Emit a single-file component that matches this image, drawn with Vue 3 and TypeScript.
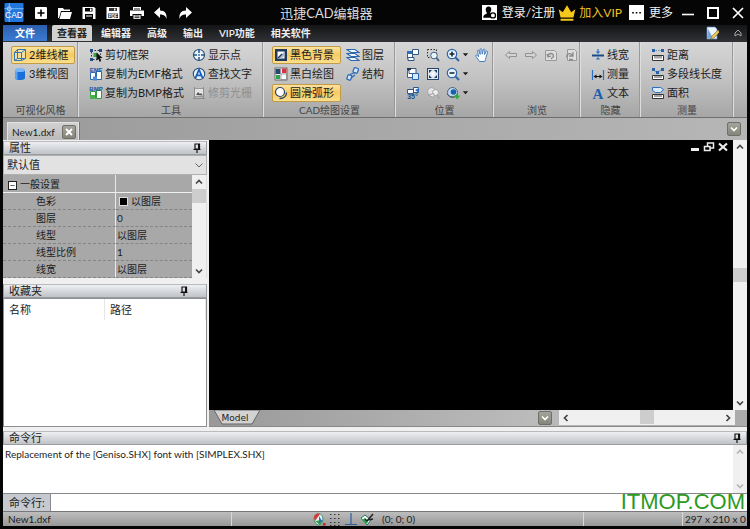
<script setup lang="ts">
import { ref } from 'vue'

interface Tool {
  icon: string
  label: string
  on?: boolean
  off?: boolean
}

const page = '<path d="M1.5 3.5h5v7h-5z" fill="#fff" stroke="#3b5f8f"/>'

const icons: Record<string, string> = {
  plus: '<rect x="1" y="1" width="12" height="12" rx="1" fill="#fff"/><path d="M7 3.500v7M3.500 7h7" stroke="#000" stroke-width="1.600"/>',
  folder: '<path d="M0 2h5l1 1.500h6V5H3L1 12H0z" fill="#fff"/><path d="M3.500 6H14l-2 7H1.500z" fill="#fff"/>',
  save: '<path d="M0.500 1h11.500l1.500 1.500V13h-13z" fill="#fff"/><path d="M3 2h7.500v3.500H3zM3 8h8v5H3z" fill="#000"/><path d="M8 2.500h1.500v2.500H8zM4 9.500h6v1H4z" fill="#fff"/>',
  savepdf: '<path d="M0.500 1h13v12h-13z" fill="#fff"/><path d="M3 2h8v3H3zM2 7.500h10v4.500H2z" fill="#333"/><path d="M8 2.500h1.500v2H8z" fill="#fff"/><text x="7" y="11.500" font-size="4.500" font-weight="bold" text-anchor="middle" fill="#fff" font-family="Liberation Sans">PDF</text>',
  print: '<path d="M3 1h8v3H3zM0 4.500h14V10h-2.500V8h-9v2H0z" fill="#fff"/><path d="M3.500 9h7v4h-7z" fill="#fff"/><path d="M4 3h6M4.500 10h5M4.500 11.700h5" stroke="#000" stroke-width="0.900"/>',
  undo: '<path d="M6 1v3.500c5 0 7 3 6.500 8.500-1-3.500-3-4.500-6.500-4.500V12L0 6.500z" fill="#fff"/>',
  redo: '<path d="M8 1v3.500c-5 0-7 3-6.500 8.500 1-3.500 3-4.500 6.500-4.500V12l6-5.500z" fill="#fff"/>',
  user: '<rect width="14" height="14" fill="#fff"/><path d="M6 1.500c2 0 3 1.300 2.600 3.500-.2 1-.6 1.500-1 2 .1 1 1 1 1.400 1.500L8 12H1.200c0-2.500.8-2.800 3.200-3.800V7C3 5.500 3 1.500 6 1.500z" fill="#000"/><circle cx="10.200" cy="9.700" r="2.400" fill="#fff" stroke="#000" stroke-width="1.200"/>',
  crown: '<path d="M0.500 4l3.200 2.500L7 1l3.300 5.500L13.500 4 12 10.500H2zM2 11.500h10V13H2z" fill="#f7c81c"/>',
  dots: '<rect width="14" height="14" fill="#fff"/><path d="M3 6.500h1.500V8H3zM6.300 6.500h1.500V8H6.300zM9.600 6.500h1.500V8H9.600z" fill="#000"/>',
  min: '<path d="M1 8.500h12" stroke="#fff" stroke-width="1.600"/>',
  max: '<rect x="2" y="2" width="10" height="10" fill="none" stroke="#fff" stroke-width="2"/>',
  close: '<path d="M2 2l10 10M12 2L2 12" stroke="#fff" stroke-width="1.700"/>',
  note: '<path d="M2 1h8l2 2v10H2z" fill="#eef4fc" stroke="#5a86c2" stroke-width="0.700"/><path d="M2 13L3 3l5 9z" fill="#78a7e0"/><path d="M13 4L7 10l-1.500 3L9 12l5.500-6z" fill="#e8c860" stroke="#7a6020" stroke-width="0.600"/>',
  wire: '<path d="M4.500 1.500h8v9h-8zM1.500 4.500h7v8h-7zM1.500 4.500l3-3M8.500 4.500l4-3M8.500 12.500l4-2M1.500 12.500l3-2" fill="#e9f0d8" fill-opacity="0.500" stroke="#3277b4"/>',
  cylinder: '<path d="M2 3v8c0 2.700 10 2.700 10 0V3z" fill="#1b6fdd"/><path d="M2 3v8c0 .8 1 1.400 2.500 1.700V4z" fill="#5da2f3"/><ellipse cx="7" cy="3" rx="5" ry="2" fill="#7ab6f8"/>',
  clip: '<path d="M2.500 2.500h9v9h-9z" fill="none" stroke="#333" stroke-dasharray="1.500 1.500"/><path d="M1 1h3v3H1zM10 1h3v3h-3zM1 10h3v3H1z" fill="#234c85"/><path d="M4.500 5h4v4h-4z" fill="#36a04a"/><path d="M7.500 4.500l6 5.500-2.500.2 1.200 3-1.600.6-1.200-2.900-1.900 1.700z" fill="#111"/>',
  emf: '<path d="M1.500 5.500h5v7h-5zM7.500 4.500h5v8h-5z" fill="#fff" stroke="#2d68b0"/><path d="M4 9.500h4v4H4z" fill="#4d8bd8"/><text x="7" y="5" font-size="6" font-weight="bold" text-anchor="middle" fill="#1757a6" font-family="Liberation Sans">EMF</text>',
  bmp: '<path d="M1.500 5.500h5v7h-5zM7.500 4.500h5v8h-5z" fill="#fff" stroke="#319c3c"/><path d="M1 9h5v4H1z" fill="#43b24b"/><text x="7" y="5" font-size="6" font-weight="bold" text-anchor="middle" fill="#1757a6" font-family="Liberation Sans">BMP</text>',
  point: '<circle cx="7" cy="7" r="5.500" fill="#eef4fa" stroke="#28547f" stroke-width="1.200"/><path d="M7 1v4M7 9v4M1 7h4M9 7h4" stroke="#28547f" stroke-width="1.500"/><circle cx="7" cy="7" r="1" fill="#2673c4"/>',
  find: '<circle cx="7" cy="7" r="5.700" fill="#e6f0fb" stroke="#35506e" stroke-width="1.100"/><path d="M3.500 11L7 2.500l3.500 8.500M5 8.300h4" fill="none" stroke="#185fb8" stroke-width="1.800"/>',
  raster: '<path d="M2.500 2.500h9v8h-9z" fill="#e4e4e4" stroke="#999"/><path d="M4 9l2-3 2 2 1-1 2 2.500z" fill="#555"/><path d="M1 12.500h12M2.500 1v12M11.500 1v12" stroke="#8c8c8c"/>',
  blackbg: '<rect x="1" y="1" width="12" height="12" fill="#1f3a5c"/><path d="M3.500 3.500h7v7h-7z" fill="#fff"/><path d="M10.500 3.500v4l-3 3h-4z" fill="#a8b8c8"/><path d="M4 10l4-4" stroke="#1f3a5c" stroke-width="1.200"/>',
  mono: '<rect x="1" y="1" width="12" height="12" fill="#eee" stroke="#555" stroke-width="0.800"/><path d="M1.500 2h5v5h-5z" fill="#29466f"/><path d="M8 1.500h4.500V6H8z" fill="#d8323c"/><path d="M2 8h4v4H2z" fill="#2fa44d"/><path d="M7 7h5.500v5.500H7z" fill="#fff" stroke="#777" stroke-width="0.700"/>',
  arc: '<circle cx="6" cy="6" r="4.500" fill="#fff" stroke="#2a4568" stroke-width="1.200"/><path d="M12.500 6.500c0 4-3 6-7 6" fill="none" stroke="#2a4568" stroke-width="1.300"/>',
  layers: '<path d="M1 1.500h8l4 3H5zM1 5.500h8l4 3H5zM1 9.500h8l4 3H5z" fill="#f4f9ff" stroke="#2b68ad" stroke-width="1.100"/>',
  link: '<g fill="#d9e8f8" stroke="#2d6cb5" stroke-width="1.300"><rect x="7.500" y="1" width="4.500" height="5" rx="1" transform="rotate(20 10 3.500)"/><rect x="1.500" y="8" width="4" height="5" rx="1" transform="rotate(20 3.500 10)"/><path d="M4 7.500l5-2M5 11l4-3"/></g>',
  rotA: `${page}<path d="M6.500 1.500h6v5h-6zM2 9.500h6v3H2z" fill="#fff" stroke="#315784"/><path d="M1 3h5v3H1z" fill="#2b70c0"/>`,
  rotB: `${page}<path d="M3 1.500h7v5H3z" fill="#fff" stroke="#315784"/><path d="M6.500 6.500h6v6h-6z" fill="#dbeafb" stroke="#2867b0"/><path d="M1 1h4v2H1z" fill="#22354c"/>`,
  rotC: '<path d="M1.500 3.500h6v4h-6zM7.500 1.500h5v5h-5z" fill="#fff" stroke="#315784"/><path d="M9 4l4-2v5z" fill="#2b70c0"/><text x="6.500" y="13" font-size="7" font-weight="bold" text-anchor="middle" fill="#1b4f90" font-family="Liberation Sans">35°</text>',
  zoomwin: '<path d="M1.500 1.500h9v8h-9z" fill="none" stroke="#333" stroke-dasharray="1.500 1.500"/><circle cx="8" cy="7.500" r="3.300" fill="#eaf4ff" stroke="#3c5f86"/><path d="M10.500 10l2.500 3" stroke="#3c5f86" stroke-width="1.800"/>',
  fit: '<rect x="1.500" y="1.500" width="11" height="11" fill="#dde6ef" stroke="#27466c"/><path d="M3 3h3L3 6zM11 3v3L8 3zM3 11V8l3 3zM11 11H8l3-3z" fill="#1f3a5c"/><path d="M5.500 5.500h3v3h-3z" fill="#fff"/>',
  zoomprev: '<circle cx="5.500" cy="5.500" r="4" fill="#e4e4e4" stroke="#a2a2a2"/><circle cx="9.500" cy="6.500" r="3" fill="#eee" stroke="#a2a2a2"/><path d="M11 9l2.500 3.500" stroke="#a2a2a2" stroke-width="1.500"/><path d="M2 9l6-1.500v4z" fill="#eee" stroke="#a2a2a2"/>',
  zoomin: '<circle cx="6" cy="6" r="4.700" fill="#e9f4ff" stroke="#2c66a8" stroke-width="1.200"/><path d="M3.500 6h5M6 3.500v5" stroke="#123" stroke-width="1.500"/><path d="M9.500 9.500L13 13" stroke="#2c66a8" stroke-width="2"/>',
  zoomout: '<circle cx="6" cy="6" r="4.700" fill="#e9f4ff" stroke="#2c66a8" stroke-width="1.200"/><path d="M3.500 6h5" stroke="#123" stroke-width="1.500"/><path d="M9.500 9.500L13 13" stroke="#2c66a8" stroke-width="2"/>',
  orbit: '<circle cx="6.500" cy="6.500" r="5" fill="#bcd8f2" stroke="#47627f"/><circle cx="7.500" cy="6" r="2.800" fill="#1d5eaa"/><path d="M1 8c3 3.500 7 3.500 10 1" stroke="#555" fill="none"/><path d="M8.500 10.500h5M11 8v5" stroke="#29b03a" stroke-width="1.800"/>',
  hand: '<path d="M4.500 13.500L1 8.500c-.8-1.300.6-2 1.400-1l1.300 1.300L2.500 3.300c-.3-1.300 1.200-1.600 1.500-.4l1.200 3.500L5 1.600c0-1.300 1.600-1.300 1.700 0l.6 4.500 1-4.300c.3-1.200 1.700-.9 1.600.3L9.500 6.500l1.600-3c.6-1 1.800-.4 1.500.7L11 9.500c-.3 1.800-.8 2.500-1.300 4z" fill="#f8fbff" stroke="#3873b8" stroke-width="0.900"/>',
  prev: '<path d="M1.500 7l4-3.500v2h7v3h-7v2z" fill="#d4d4d4" stroke="#929292"/>',
  next: '<path d="M12.500 7l-4-3.500v2h-7v3h7v2z" fill="#d4d4d4" stroke="#929292"/>',
  rotL: '<path d="M1.500 2.500h9l2 2v8h-11z" fill="#dedede" stroke="#999"/><path d="M4 8.500c0-4 6-4 5.500 0L7 11M3 6l1 3 3-1" fill="none" stroke="#8a8a8a" stroke-width="1.300"/>',
  rotR: '<path d="M3.500 1.500h7l2 2v9h-9z" fill="#dedede" stroke="#999"/><path d="M3 9.500c-1-4 3-5 5.500-2.500M9 4v4H5M5 11.500h4" fill="none" stroke="#8a8a8a" stroke-width="1.300"/>',
  lwidth: '<path d="M1 7.500h12" stroke="#184b87" stroke-width="2"/><path d="M7 6L4.800 3.500h1.600V1h1.200v2.500h1.600zM7 9l-2.200 2.500h4.400z" fill="#2b6fc0"/>',
  measure: '<path d="M1.500 3v10M12.500 3v10" stroke="#2b6fc0" stroke-width="1.200"/><path d="M3 9.500h8" stroke="#111"/><path d="M2.500 9.500l3-2v4zM11.500 9.500l-3-2v4z" fill="#111"/>',
  letter: '<text x="7" y="12.500" font-size="15" font-weight="bold" text-anchor="middle" fill="#1d5fae" font-family="Liberation Serif">A</text>',
  dist: '<path d="M2 2.500h10" stroke="#6e8fb5" stroke-dasharray="1.500 1"/><path d="M1 1h3v3H1zM10 1h3v3h-3z" fill="#2462ab"/><path d="M1.500 7.500h11v5h-11z" fill="#fff" stroke="#333"/><path d="M4 8v2.500M6 8v2.500M8 8v2.500M10 8v2.500" stroke="#333" stroke-width="0.900"/>',
  poly: '<path d="M2 2.500l4 3 5-3" stroke="#6e8fb5" fill="none"/><path d="M1 1h3v3H1zM10 1h3v3h-3zM5 4h3v3H5z" fill="#2462ab"/><path d="M1.500 8.500h11v4h-11z" fill="#fff" stroke="#333"/><path d="M4 9v2M6 9v2M8 9v2M10 9v2" stroke="#333" stroke-width="0.900"/>',
  area: '<path d="M1.500 1.500h8l3 2-3 3h-5l-3-2z" fill="#dbeafb" stroke="#2b6fc0"/><path d="M1.500 8.500h11v4h-11z" fill="#fff" stroke="#333"/><path d="M4 9v2M6 9v2M8 9v2M10 9v2" stroke="#333" stroke-width="0.900"/>',
  pin: '<path d="M5 3h4.500v5H5zM3.500 8.500h7M7 8.500V12" fill="none" stroke="#111" stroke-width="1.200"/><path d="M8 3h1.800v5H8z" fill="#111"/>',
  up: '<path d="M4 8.500l3-3 3 3" fill="none" stroke="currentColor" stroke-width="1.700"/>',
  down: '<path d="M4 5.500l3 3 3-3" fill="none" stroke="currentColor" stroke-width="1.700"/>',
  left: '<path d="M8.500 4l-3 3 3 3" fill="none" stroke="currentColor" stroke-width="1.700"/>',
  right: '<path d="M5.500 4l3 3-3 3" fill="none" stroke="currentColor" stroke-width="1.700"/>',
  caret: '<path d="M4 5.500h6L7 9z" fill="currentColor"/>',
  x: '<path d="M4 4l6 6M10 4l-6 6" stroke="currentColor" stroke-width="1.900"/>',
  mdimin: '<path d="M3 8h8v3H3z" fill="#eee"/>',
  mdimax: '<path d="M5.500 3h6v5h-6z" fill="none" stroke="#eee" stroke-width="1.500"/><path d="M2.500 6.500H8v4H2.500z" fill="#000" stroke="#eee" stroke-width="1.500"/>',
  mdiclose: '<path d="M3 3.500l8 7M11 3.500l-8 7" stroke="#eee" stroke-width="2.200"/>',
  collapse: '<path d="M4 7l3-3 3 3v3L7 8l-3 2z" fill="none" stroke="#aaa"/>',
  snap: '<path d="M2 7c0-7 9-7 9 0 0 3-2 5-4.500 6C4 12 2 10 2 7z" fill="#e8eef2" stroke="#397"/><path d="M2 6c0-5 5-5 6-4L3 9z" fill="#d33c3c"/><path d="M3 9l5 4 3-5z" fill="#319c48"/><path d="M7 4l3 5-3 2z" fill="#2d6cc5"/><path d="M11 11h2.500v2.500H11z" fill="#c22"/>',
  grid: '<path d="M2 2.500h11M2 6.500h11M2 10.500h11M2 13.500h11" stroke="#333" stroke-dasharray="1.500 2.500"/>',
  ortho: '<path d="M7 1v11M1 12.500h12" stroke="#2d5f9f" stroke-width="1.200"/>',
  osnap: '<path d="M1 6l4-3 6 5-4 5z" fill="#f0f7f2" stroke="#276"/><path d="M2 8l4 4 2-2-3-4z" fill="#2fa44d"/><path d="M5 7l2 2 6-7M8 8l5-1" fill="none" stroke="#222" stroke-width="1.500"/>',
}

const quick: [string, string][] = [
  ['plus', '新建'],
  ['folder', '打开'],
  ['save', '保存'],
  ['savepdf', '导出PDF'],
  ['print', '打印'],
  ['undo', '撤销'],
  ['redo', '重做'],
]

const menus = ['查看器', '编辑器', '高级', '输出', 'VIP功能', '相关软件']
const activeMenu = ref('查看器')

const groups: { name: string; kind: string; tools: Tool[] }[] = [
  {
    name: '可视化风格',
    kind: 'single',
    tools: [
      { icon: 'wire', label: '2维线框', on: true },
      { icon: 'cylinder', label: '3维视图' },
    ],
  },
  {
    name: '工具',
    kind: 'wide',
    tools: [
      { icon: 'clip', label: '剪切框架' },
      { icon: 'emf', label: '复制为EMF格式' },
      { icon: 'bmp', label: '复制为BMP格式' },
      { icon: 'point', label: '显示点' },
      { icon: 'find', label: '查找文字' },
      { icon: 'raster', label: '修剪光栅', off: true },
    ],
  },
  {
    name: 'CAD绘图设置',
    kind: 'medium',
    tools: [
      { icon: 'blackbg', label: '黑色背景', on: true },
      { icon: 'mono', label: '黑白绘图' },
      { icon: 'arc', label: '圆滑弧形', on: true },
      { icon: 'layers', label: '图层' },
      { icon: 'link', label: '结构' },
    ],
  },
  {
    name: '位置',
    kind: 'icons',
    tools: ['rotA', 'rotB', 'rotC', 'zoomwin', 'fit', 'zoomprev', 'zoomin', 'zoomout', 'orbit', 'hand'].map((icon) => ({ icon, label: '' })),
  },
  {
    name: '浏览',
    kind: 'strip',
    tools: ['prev', 'next', 'rotL', 'rotR'].map((icon) => ({ icon, label: '' })),
  },
  {
    name: '隐藏',
    kind: 'single',
    tools: [
      { icon: 'lwidth', label: '线宽' },
      { icon: 'measure', label: '测量' },
      { icon: 'letter', label: '文本' },
    ],
  },
  {
    name: '测量',
    kind: 'single',
    tools: [
      { icon: 'dist', label: '距离' },
      { icon: 'poly', label: '多段线长度' },
      { icon: 'area', label: '面积' },
    ],
  },
]

const dropdowns = ['zoomin', 'zoomout', 'orbit']

const properties = [
  { name: '色彩', value: '以图层', swatch: true },
  { name: '图层', value: '0' },
  { name: '线型', value: '以图层' },
  { name: '线型比例', value: '1' },
  { name: '线宽', value: '以图层' },
]

const preset = ref('默认值')
const command = ref('')
</script>

<template>
  <div class="app">
    <header class="title-bar">
      <svg class="logo" viewBox="0 0 20 20">
        <rect width="20" height="20" rx="1" fill="#2277dc" />
        <path d="M0 6h20M5 0v20" stroke="#7db9f7" />
        <circle cx="5" cy="6" r="2" fill="none" stroke="#b8dcff" />
        <text x="10" y="16" font-size="9" text-anchor="middle" fill="#fff" font-family="Liberation Sans">CAD</text>
      </svg>
      <nav class="quick">
        <button v-for="[icon, label] in quick" :key="icon" :aria-label="label">
          <svg class="ic" viewBox="0 0 14 14" v-html="icons[icon]" />
        </button>
      </nav>
      <h1>迅捷CAD编辑器</h1>
      <div class="account">
        <button><svg class="ic big" viewBox="0 0 14 14" v-html="icons.user" />登录/注册</button>
        <button class="vip"><svg class="ic crown" viewBox="0 0 14 14" v-html="icons.crown" />加入VIP</button>
        <button><svg class="ic big" viewBox="0 0 14 14" v-html="icons.dots" />更多</button>
      </div>
      <div class="win">
        <button aria-label="最小化"><svg class="ic" viewBox="0 0 14 14" v-html="icons.min" /></button>
        <button aria-label="最大化"><svg class="ic" viewBox="0 0 14 14" v-html="icons.max" /></button>
        <button aria-label="关闭"><svg class="ic" viewBox="0 0 14 14" v-html="icons.close" /></button>
      </div>
    </header>

    <div class="frame">
      <nav class="menu">
        <button class="file">文件</button>
        <button v-for="m in menus" :key="m" :class="{ active: m === activeMenu }" @click="activeMenu = m">{{ m }}</button>
        <span class="grow"></span>
        <button class="tiny" aria-label="样式"><svg class="ic" viewBox="0 0 14 14" v-html="icons.note" /></button>
        <button class="tiny" aria-label="折叠"><svg class="ic" viewBox="0 0 14 14" v-html="icons.collapse" /></button>
      </nav>

      <section class="ribbon">
        <div v-for="g in groups" :key="g.name" class="group">
          <div class="tools" :class="g.kind">
            <button
              v-for="t in g.tools"
              :key="t.icon"
              class="tool"
              :class="{ on: t.on }"
              :disabled="t.off"
              :aria-label="t.label || t.icon"
            >
              <svg class="ic" viewBox="0 0 14 14" v-html="icons[t.icon]" />
              <span v-if="t.label">{{ t.label }}</span>
              <svg v-if="dropdowns.includes(t.icon)" class="drop" viewBox="3 3 8 8" v-html="icons.caret" />
            </button>
          </div>
          <div class="caption">{{ g.name }}</div>
        </div>
      </section>

      <div class="docs">
        <div class="doc-tab">
          <span>New1.dxf</span>
          <button class="chip" aria-label="关闭文档"><svg class="ic" viewBox="0 0 14 14" v-html="icons.x" /></button>
        </div>
        <span class="grow"></span>
        <button class="chip" aria-label="文档列表"><svg class="ic" viewBox="0 0 14 14" v-html="icons.down" /></button>
      </div>

      <main class="work">
        <aside class="side">
          <section class="props">
            <h2 class="head">属性<svg class="ic" viewBox="0 0 14 14" v-html="icons.pin" /></h2>
            <div class="select">
              <select v-model="preset" aria-label="预设">
                <option>默认值</option>
              </select>
              <svg class="ic" viewBox="0 0 14 14"><path d="M3.500 5.500L7 9l3.500-3.500" fill="none" stroke="#666" /></svg>
            </div>
            <div class="sheet">
              <table>
                <thead>
                  <tr>
                    <th><span class="fold">−</span>一般设置</th>
                    <td></td>
                  </tr>
                </thead>
                <tbody>
                  <tr v-for="p in properties" :key="p.name">
                    <th scope="row">{{ p.name }}</th>
                    <td><span v-if="p.swatch" class="swatch"></span>{{ p.value }}</td>
                  </tr>
                </tbody>
              </table>
              <div class="bar vertical">
                <button aria-label="向上"><svg class="ic" viewBox="0 0 14 14" v-html="icons.up" /></button>
                <i class="thumb"></i>
                <span class="grow"></span>
                <button aria-label="向下"><svg class="ic" viewBox="0 0 14 14" v-html="icons.down" /></button>
              </div>
            </div>
          </section>
          <section class="favs">
            <h2 class="head inset">收藏夹<svg class="ic" viewBox="0 0 14 14" v-html="icons.pin" /></h2>
            <div class="list">
              <table>
                <thead>
                  <tr>
                    <th>名称</th>
                    <th>路径</th>
                  </tr>
                </thead>
              </table>
            </div>
          </section>
        </aside>

        <section class="view">
          <div class="stage">
            <div class="canvas">
              <button aria-label="最小化视图"><svg class="ic" viewBox="0 0 14 14" v-html="icons.mdimin" /></button>
              <button aria-label="还原视图"><svg class="ic" viewBox="0 0 14 14" v-html="icons.mdimax" /></button>
              <button aria-label="关闭视图"><svg class="ic" viewBox="0 0 14 14" v-html="icons.mdiclose" /></button>
            </div>
            <div class="bar vertical">
              <button aria-label="向上"><svg class="ic" viewBox="0 0 14 14" v-html="icons.up" /></button>
              <span class="grow"></span>
              <i class="thumb"></i>
              <span class="grow"></span>
              <button aria-label="向下"><svg class="ic" viewBox="0 0 14 14" v-html="icons.down" /></button>
            </div>
          </div>
          <div class="sheets">
            <button class="model">
              <svg viewBox="0 0 48 16" preserveAspectRatio="none"><path d="M1 0l8 14h30l8-14z" fill="#d2d2d2" stroke="#666" /></svg>
              <span>Model</span>
            </button>
            <span class="grow"></span>
            <button class="chip" aria-label="布局列表"><svg class="ic" viewBox="0 0 14 14" v-html="icons.down" /></button>
            <div class="bar horizontal">
              <button aria-label="向左"><svg class="ic" viewBox="0 0 14 14" v-html="icons.left" /></button>
              <span class="grow"></span>
              <i class="thumb"></i>
              <span class="grow"></span>
              <button aria-label="向右"><svg class="ic" viewBox="0 0 14 14" v-html="icons.right" /></button>
            </div>
          </div>
        </section>
      </main>

      <section class="console">
        <h2 class="head">命令行<svg class="ic" viewBox="0 0 14 14" v-html="icons.pin" /></h2>
        <div class="log">
          <p>Replacement of the [Geniso.SHX] font with [SIMPLEX.SHX]</p>
          <div class="bar vertical faint">
            <button aria-label="向上"><svg class="ic" viewBox="0 0 14 14" v-html="icons.up" /></button>
            <span class="grow"></span>
            <button aria-label="向下"><svg class="ic" viewBox="0 0 14 14" v-html="icons.down" /></button>
          </div>
        </div>
        <div class="prompt">
          <label for="cmd">命令行:</label>
          <input id="cmd" v-model="command" type="text" />
          <span class="mark">ITMOP.COM</span>
        </div>
      </section>

      <footer class="status">
        <span>New1.dxf</span>
        <span class="modes">
          <button v-for="i in ['snap', 'grid', 'ortho', 'osnap']" :key="i" :aria-label="i">
            <svg class="ic" viewBox="0 0 14 14" v-html="icons[i]" />
          </button>
          <span class="coords">(0; 0; 0)</span>
        </span>
        <span></span>
        <span>297 x 210 x 0</span>
      </footer>
    </div>
  </div>
</template>

<style>
body {
  margin: 0;
  background: #000;
}
</style>

<style scoped>
.app {
  display: flex;
  flex-direction: column;
  min-height: 100vh;
  background: #050505;
  color: #1c1c1c;
  font: 11px/14px Lato, 'Noto Sans CJK SC', sans-serif;
}
.app *,
.app {
  box-sizing: border-box;
}
button {
  display: inline-flex;
  align-items: center;
  margin: 0;
  padding: 0;
  border: 0;
  background: none;
  color: inherit;
  font: inherit;
  white-space: nowrap;
}
h1,
h2,
p {
  margin: 0;
  font: inherit;
}
.ic {
  display: block;
  flex: none;
  width: 14px;
  height: 14px;
}
.grow {
  flex: 1;
}

.title-bar {
  display: flex;
  align-items: center;
  height: 25px;
  padding-left: 4px;
  color: #f2f2f2;
}
.logo {
  width: 20px;
  height: 19px;
}
.quick {
  display: flex;
  margin-left: 5px;
}
.quick button {
  justify-content: center;
  width: 24px;
  height: 24px;
}
.title-bar h1 {
  flex: 1;
  padding-right: 26px;
  font-size: 13px;
  line-height: 18px;
  text-align: center;
  color: #ddd;
}
.account {
  display: flex;
  gap: 3px;
  font-size: 12px;
}
.account button {
  gap: 5px;
}
.account .vip {
  gap: 3px;
  color: #f0c020;
  margin-right: 4px;
}
.big {
  width: 15px;
  height: 15px;
}
.crown {
  width: 18px;
  height: 18px;
}
.win {
  display: flex;
  margin-left: 2px;
}
.win button {
  justify-content: center;
  width: 25px;
  height: 24px;
}

.frame {
  display: flex;
  flex: 1;
  flex-direction: column;
  margin: 0 3px 3px;
  background: #f0f0f0;
}
.menu {
  display: flex;
  height: 17px;
  padding-bottom: 1px;
  background: linear-gradient(#141516, #303236);
  color: #eee;
  font-size: 10px;
  font-weight: 600;
}
.menu button {
  padding: 0 8px;
}
.menu .file {
  justify-content: center;
  width: 44px;
  margin-right: 5px;
  background: linear-gradient(#2b5fae, #3b7bd2);
  color: #fff;
}
.menu .active {
  padding: 0 5px;
  margin-right: 1px;
  border-radius: 2px 2px 0 0;
  background: #d2d2d2;
  color: #222;
}
.menu .tiny {
  padding: 0 2px;
  margin-left: 8px;
}

.ribbon {
  display: grid;
  grid-template-columns: 76px 185px 132px 98px 87px 60px 93px 1fr;
  height: 76px;
  border-bottom: 1px solid #6e6e6e;
  background: linear-gradient(#d6d6d6, #c4c4c4 45%, #a6a6a6);
}
.group {
  display: flex;
  flex-direction: column;
  padding: 3px 0 0 8px;
  border-right: 1px solid #dedede;
  box-shadow: inset -1px 0 #999;
}
.tools {
  display: grid;
  flex: 1;
  grid-template-rows: repeat(3, 19px);
  grid-auto-flow: column;
  align-items: center;
  justify-content: start;
}
.single {
  grid-template-columns: auto;
}
.wide {
  grid-template-columns: 103px auto;
}
.medium {
  grid-template-columns: 72px auto;
}
.icons {
  grid-template-columns: 20px 20px 29px 18px;
}
.strip {
  grid-template-columns: repeat(4, 20px);
}
.strip .tool {
  grid-row: 1;
}
.tool {
  justify-self: start;
  gap: 2px;
  height: 18px;
  padding: 0 1px;
  border: 1px solid transparent;
  border-radius: 2px;
}
.tool:disabled {
  color: #8e8e8e;
}
.single .tool.on,
.medium .tool.on {
  min-width: 64px;
  padding-right: 6px;
  border-color: #c39a45;
  background: linear-gradient(#fbe3a0, #f7ca62 50%, #fbe08e);
}
.drop {
  width: 7px;
  height: 7px;
}
.caption {
  height: 15px;
  margin: 0 2px 0 -6px;
  font-size: 10px;
  line-height: 16px;
  text-align: center;
  color: #444;
}

.docs {
  display: flex;
  align-items: center;
  height: 22px;
  padding: 0 6px 0 4px;
  background: linear-gradient(90deg, #9a9a9a, #b6b6b6);
}
.doc-tab {
  display: flex;
  align-items: center;
  align-self: flex-end;
  gap: 7px;
  height: 18px;
  padding: 0 2px 0 4px;
  border: 1px solid #e2e2e2;
  border-bottom: 0;
  background: linear-gradient(#d2d2d2, #bababa);
  box-shadow: 1px 0 #777;
  font-size: 10px;
}
.chip {
  justify-content: center;
  width: 14px;
  height: 14px;
  border: 1px solid #6f6f68;
  border-radius: 2px;
  background: linear-gradient(#a4a49c, #85857c);
  color: #fff;
}

.work {
  display: grid;
  flex: 1;
  grid-template-columns: 206px 1fr;
}
.side {
  display: flex;
  flex-direction: column;
  gap: 6px;
  padding: 1px 2px 0 0;
}
.head {
  display: flex;
  align-items: center;
  justify-content: space-between;
  height: 14px;
  padding: 0 2px 0 5px;
  border: 1px solid #9a9ca0;
  border-top-color: #b8babd;
  background: linear-gradient(#eef0f3, #bfc2c6);
  line-height: 12px;
}
.inset {
  padding-right: 15px;
}
.select {
  display: flex;
  align-items: center;
  height: 20px;
  border: 1px solid #b0b0b0;
  background: #e2e2e2;
}
.select select {
  flex: 1;
  min-width: 0;
  padding: 0 3px;
  border: 0;
  appearance: none;
  background: none;
  color: #222;
  font: inherit;
}
.sheet {
  display: flex;
  border-right: 1px solid #ddd;
}
table {
  border-spacing: 0;
  table-layout: fixed;
}
th,
td {
  padding: 0;
  font-weight: normal;
  text-align: left;
}
.sheet table {
  flex: 1;
  background: #a8a8a8;
  font-size: 10px;
}
.sheet tr > * {
  height: 17px;
  border-bottom: 1px dashed #858585;
}
.sheet tr > :first-child {
  width: 113px;
  border-right: 1px solid #e8e8e8;
}
.sheet thead tr > * {
  height: 18px;
  border-bottom: 1px solid #f0f0f0;
}
.sheet thead th {
  padding-left: 5px;
}
.sheet tbody th {
  padding-left: 33px;
}
.sheet tbody td {
  padding-left: 1px;
}
.fold {
  display: inline-block;
  width: 9px;
  height: 9px;
  margin-right: 3px;
  border: 1px solid #222;
  background: #fff;
  line-height: 7px;
  text-align: center;
  vertical-align: -1px;
}
.swatch {
  display: inline-block;
  width: 9px;
  height: 9px;
  margin: 0 3px 0 2px;
  border: 1px solid #ddd;
  background: #000;
  vertical-align: -1px;
}
.bar {
  display: flex;
  background: #f0f0f0;
  color: #444;
}
.vertical {
  flex-direction: column;
  width: 14px;
}
.horizontal {
  width: 176px;
  height: 15px;
}
.horizontal button {
  height: 15px;
}
.thumb {
  width: 14px;
  height: 14px;
  background: #cdcdcd;
}
.faint {
  color: #b5b5b5;
}
.favs {
  display: flex;
  flex: 1;
  flex-direction: column;
}
.list {
  flex: 1;
  border: 1px solid #8c8e92;
  background: #fff;
}
.list table {
  width: 100%;
}
.list th {
  width: 50%;
  height: 21px;
  padding-left: 5px;
  border-right: 1px solid #e6e6e6;
}

.view {
  display: flex;
  flex-direction: column;
}
.stage {
  display: flex;
  flex: 1;
}
.canvas {
  display: flex;
  flex: 1;
  align-items: flex-start;
  justify-content: flex-end;
  padding: 0 3px;
  background: #000;
}
.sheets {
  display: flex;
  height: 17px;
  padding-right: 12px;
  border-bottom: 1px solid #888;
  background: linear-gradient(90deg, #999, #bbb 60%, #aaa);
}
.model {
  display: grid;
  width: 48px;
  height: 16px;
  margin-left: 4px;
  font: 9px/14px 'DejaVu Sans', sans-serif;
}
.model svg {
  grid-area: 1 / 1;
  width: 48px;
  height: 16px;
}
.model span {
  grid-area: 1 / 1;
  padding-right: 4px;
  text-align: center;
}
.sheets .chip {
  align-self: center;
  margin-right: 7px;
}

.console {
  padding-top: 4px;
}
.log {
  display: flex;
  justify-content: space-between;
  height: 48px;
  background: #fff;
}
.log p {
  padding: 2px;
  font-size: 10px;
}
.prompt {
  position: relative;
  display: flex;
  height: 18px;
  border-top: 1px solid #85878b;
}
.prompt label {
  width: 47px;
  padding-left: 6px;
  background: #c6cad0;
  line-height: 17px;
}
.prompt input {
  flex: 1;
  min-width: 0;
  padding: 0 3px;
  border: 0;
  border-left: 1px solid #8a8c90;
  background: #fff;
  font: inherit;
}
.mark {
  position: absolute;
  right: 2px;
  bottom: 0;
  color: #2b9a1e;
  font: 22px/18px 'Liberation Sans', sans-serif;
  pointer-events: none;
}
.status {
  display: grid;
  grid-template-columns: 229fr 352fr 99fr 64fr;
  height: 15px;
  border-top: 1px solid #777;
  background: linear-gradient(#bdbdbd, #989898);
  font-size: 10px;
}
.status > span {
  min-width: 0;
  padding-left: 5px;
  border-right: 1px solid #d8d8d8;
  white-space: nowrap;
}
.status > span:last-child {
  padding-left: 2px;
  border-right: 0;
}
.status .modes {
  display: flex;
  gap: 2px;
  padding-left: 80px;
}
.modes button {
  height: 14px;
}
.coords {
  margin-left: 6px;
}
</style>
